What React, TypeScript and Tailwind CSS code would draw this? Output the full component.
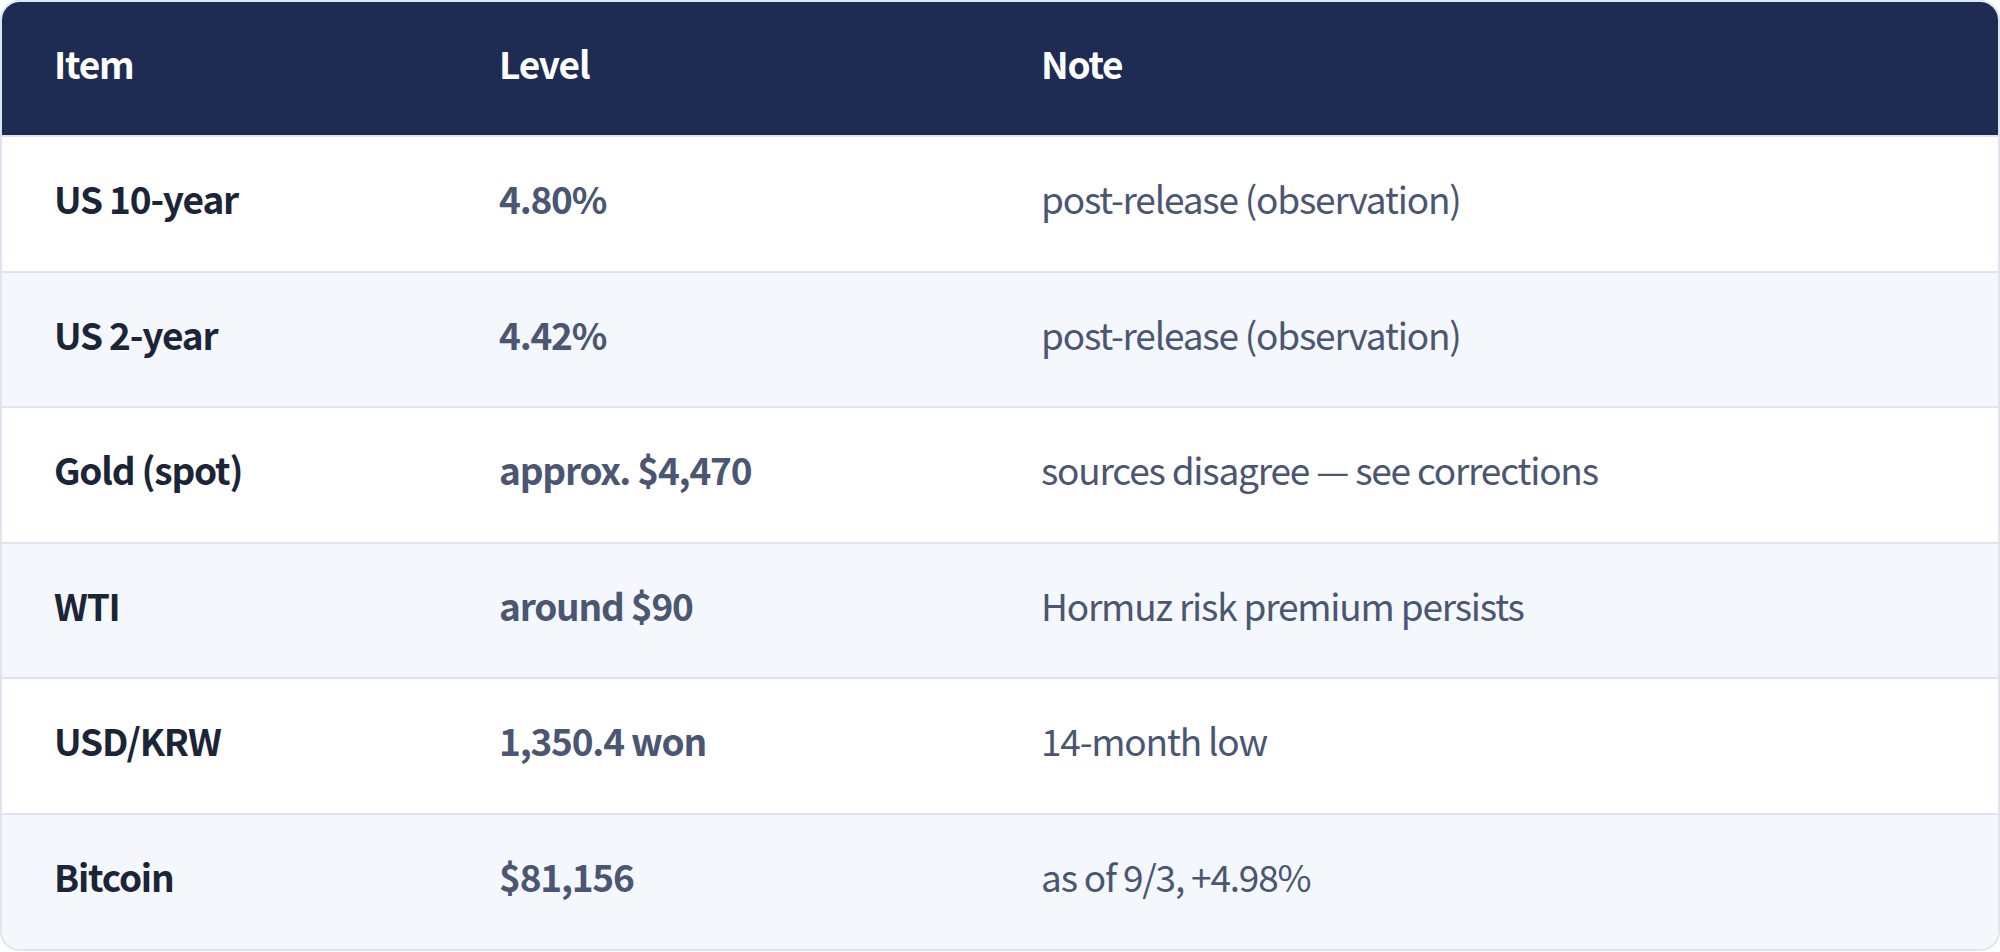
const rows = [
  { item: "US 10-year", level: "4.80%", note: "post-release (observation)" },
  { item: "US 2-year", level: "4.42%", note: "post-release (observation)" },
  { item: "Gold (spot)", level: "approx. $4,470", note: "sources disagree — see corrections" },
  { item: "WTI", level: "around $90", note: "Hormuz risk premium persists" },
  { item: "USD/KRW", level: "1,350.4 won", note: "14-month low" },
  { item: "Bitcoin", level: "$81,156", note: "as of 9/3, +4.98%" },
];

export default function App() {
  return (
    <div className="w-[2000px] h-[952px] bg-white font-['Noto_Sans_CJK_KR','Noto_Sans',sans-serif] text-[37px] tracking-[-1.2px]">
      <div className="border-2 border-[#dfe5f0] rounded-[20px] overflow-hidden">
        <div className="grid grid-cols-[445px_542px_1fr] h-[133px] pb-[10px] items-center bg-[#1e2b53] text-white font-bold">
          <div className="pl-[52px]">Item</div>
          <div className="pl-[52px]">Level</div>
          <div className="pl-[52px]">Note</div>
        </div>
        {rows.map((r, i) => (
          <div
            key={r.item}
            className={`grid grid-cols-[445px_542px_1fr] h-[135.6px] pb-[10px] items-center border-t-2 border-[#dfe5f0] ${
              i % 2 === 1 ? "bg-[#f4f7fc]" : "bg-white"
            }`}
          >
            <div className="pl-[52px] font-bold text-[#1c2438]">{r.item}</div>
            <div className="pl-[52px] font-bold text-[#4a5672]">{r.level}</div>
            <div className="pl-[52px] text-[#4a5672]">{r.note}</div>
          </div>
        ))}
      </div>
    </div>
  );
}
